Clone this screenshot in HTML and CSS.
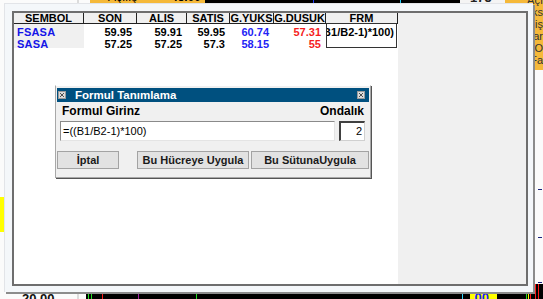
FILE: index.html
```html
<!DOCTYPE html>
<html lang="tr">

<head>
    <meta charset="UTF-8">
    <meta name="viewport" content="width=device-width, initial-scale=1.0">
    <title>Formul Tanımlama</title>
    <link rel="stylesheet" href="styles.css">
</head>

<body>
    <div class="desk">
        <!-- the trading screen behind the window -->
        <div class="bg-line"></div>
        <div class="bg-price top-price">44.10</div>
        <div class="bg-orange"><span class="bg-label">Açılış</span><span class="bg-val">45.00</span></div>
        <div class="bg-black"><i class="tick blue"></i><i class="tick cyan"></i></div>
        <div class="bg-light">175</div>
        <div class="bg-side">
            <span>Açı</span><span>ks</span><span>iş</span><span>ar</span><span>O</span><span>Fa</span>
        </div>
        <div class="bg-mark m1"></div>
        <div class="bg-mark m2"></div>
        <div class="bg-mark m3"></div>
        <div class="bg-yellow"></div>
        <div class="bg-price bottom-price">20.00</div>
        <div class="bg-chart">
            <i class="bar g" style="left: 2px"></i>
            <i class="bar g" style="left: 5px"></i>
            <i class="bar r" style="left: 16px"></i>
            <i class="bar p" style="left: 52px"></i>
            <i class="bar g" style="left: 110px"></i>
            <i class="bar c" style="left: 376px"></i>
            <div class="chart-box">00.</div>
            <i class="bar g" style="left: 440px"></i>
            <i class="bar y" style="left: 442px"></i>
            <i class="bar r" style="left: 444px"></i>
            <i class="bar r" style="left: 449px"></i>
            <i class="bar r" style="left: 452px"></i>
        </div>

        <!-- formula window -->
        <div class="window">
            <div class="panel">
                <div class="grid">
                    <div class="head">
                        <div class="hc w-sym">SEMBOL</div>
                        <div class="hc w-son">SON</div>
                        <div class="hc w-alis">ALIS</div>
                        <div class="hc w-satis">SATIS</div>
                        <div class="hc w-yuks">G.YUKS</div>
                        <div class="hc w-dusuk">G.DUSUK</div>
                        <div class="hc w-frm">FRM</div>
                    </div>
                    <div class="row">
                        <div class="sym w-sym">FSASA</div>
                        <div class="num w-son">59.95</div>
                        <div class="num w-alis">59.91</div>
                        <div class="num w-satis">59.95</div>
                        <div class="num w-yuks up">60.74</div>
                        <div class="num w-dusuk down">57.31</div>
                        <div class="num w-frm"></div>
                    </div>
                    <div class="row">
                        <div class="sym w-sym">SASA</div>
                        <div class="num w-son">57.25</div>
                        <div class="num w-alis">57.25</div>
                        <div class="num w-satis">57.3</div>
                        <div class="num w-yuks up">58.15</div>
                        <div class="num w-dusuk down">55</div>
                        <div class="num w-frm"></div>
                    </div>
                    <!-- cell being edited -->
                    <div class="editor"><span>=((B1/B2-1)*100)</span></div>
                </div>
                <div class="side"></div>
            </div>
        </div>

        <!-- dialog -->
        <div class="dialog">
            <div class="title">
                <svg class="tbox" width="8" height="8" viewBox="0 0 8 8">
                    <rect x="0.5" y="0.5" width="7" height="7" fill="#dcdcdc" stroke="#9a9a9a" />
                    <path d="M2 2 L6 6 M6 2 L2 6" stroke="#505050" stroke-width="1" />
                </svg>
                <span class="title-text">Formul Tanımlama</span>
                <svg class="tbox close" width="8" height="8" viewBox="0 0 8 8">
                    <rect x="0.5" y="0.5" width="7" height="7" fill="#dcdcdc" stroke="#9a9a9a" />
                    <path d="M2 2 L6 6 M6 2 L2 6" stroke="#505050" stroke-width="1" />
                </svg>
            </div>
            <div class="labels">
                <span>Formul Girinz</span>
                <span>Ondalık</span>
            </div>
            <div class="inputs">
                <div class="field formula">=((B1/B2-1)*100)</div>
                <div class="field digits">2</div>
            </div>
            <div class="buttons">
                <button class="btn b-cancel">İptal</button>
                <button class="btn b-cell">Bu Hücreye Uygula</button>
                <button class="btn b-col">Bu SütunaUygula</button>
            </div>
        </div>
    </div>
</body>

</html>
```

FILE: styles.css
```css
body {
    margin: 0;
    font-family: "Liberation Sans", Arial, sans-serif;
    font-size: 11px;
    font-weight: bold;
}

.desk {
    position: relative;
    width: 543px;
    height: 299px;
    overflow: hidden;
    background-color: #fbfbfb;
}

/* background app pieces */
.bg-line {
    position: absolute;
    left: 77px;
    top: 0;
    width: 2px;
    height: 299px;
    background-color: #dcdcdc;
}

.bg-price {
    position: absolute;
    font-size: 13px;
    color: #111;
    line-height: 14px;
}

.top-price {
    left: 25px;
    top: -11px;
}

.bottom-price {
    left: 22px;
    top: 292px;
}

.bg-orange {
    position: absolute;
    left: 90px;
    top: 0;
    width: 115px;
    height: 4px;
    background-color: #f5b93a;
    overflow: hidden;
}

.bg-label {
    position: absolute;
    left: 18px;
    top: -10px;
    font-weight: normal;
    font-size: 12px;
}

.bg-val {
    position: absolute;
    right: 4px;
    top: -10px;
    font-size: 12px;
}

.bg-black {
    position: absolute;
    left: 205px;
    top: 0;
    width: 255px;
    height: 4px;
    background-color: #000;
}

.tick {
    position: absolute;
    top: 0;
    width: 1px;
    height: 4px;
}

.tick.blue {
    left: 108px;
    background-color: #2040ff;
}

.tick.cyan {
    left: 195px;
    background-color: #20d0ff;
}

.bg-light {
    position: absolute;
    left: 460px;
    top: -10px;
    width: 45px;
    height: 14px;
    padding-left: 10px;
    box-sizing: border-box;
    font-size: 13px;
    color: #222;
    background-color: #f4f4f4;
}

.bg-side {
    position: absolute;
    left: 505px;
    top: -6px;
    width: 38px;
    height: 76px;
    background-color: #f5b93a;
    display: flex;
    flex-direction: column;
    align-items: flex-end;
    font-weight: normal;
    font-size: 11px;
    line-height: 12px;
    color: #333;
    overflow: hidden;
}

.bg-mark {
    position: absolute;
    left: 538px;
    width: 4px;
    height: 1px;
    background-color: #1a237e;
}

.m1 { top: 189px; }
.m2 { top: 237px; }
.m3 { top: 282px; }

.bg-yellow {
    position: absolute;
    left: 0;
    top: 197px;
    width: 4px;
    height: 35px;
    background-color: #ffff00;
}

.bg-chart {
    position: absolute;
    left: 86px;
    top: 284px;
    width: 457px;
    height: 15px;
    background-color: #000;
}

.bar {
    position: absolute;
    bottom: 0;
    width: 1px;
    height: 15px;
}

.bar.g { background-color: #22dd22; }
.bar.r { background-color: #ff1a1a; }
.bar.p { background-color: #a020a0; }
.bar.c { background-color: #30d8ff; }
.bar.y { background-color: #ffee00; }

.chart-box {
    position: absolute;
    left: 384px;
    top: 0;
    width: 27px;
    height: 15px;
    background-color: #ffff00;
    color: #1a1aff;
    font-size: 13px;
    line-height: 15px;
    padding-top: 6px;
    box-sizing: border-box;
    text-align: center;
    overflow: hidden;
}

/* window */
.window {
    position: absolute;
    left: 4px;
    top: 3px;
    width: 529px;
    height: 289px;
    box-sizing: border-box;
    padding: 7px 5px 6px 7px;
    background-color: #f4f7fa;
    border-left: 1px solid #e2e4e8;
    border-top: 1px solid #e2e4e8;
    box-shadow: 2px 2px 0 #8c8c8c;
    display: flex;
}

.panel {
    flex: 1;
    display: flex;
    border: 2px solid #6e6e6e;
}

.grid {
    position: relative;
    width: 384px;
    background-color: #fff;
}

.side {
    flex: 1;
    background-color: #f0f0f0;
}

.head {
    display: flex;
    height: 10px;
    line-height: 11px;
    background-color: #f0f0f0;
    border-bottom: 1px solid #222;
}

.hc {
    box-sizing: border-box;
    text-align: center;
    color: #000;
    border-right: 1px solid #222;
}

.w-sym { width: 70px; }
.w-son { width: 53px; }
.w-alis { width: 50px; }
.w-satis { width: 43px; }
.w-yuks { width: 44px; }
.w-dusuk { width: 52px; }
.w-frm { width: 72px; }

.row {
    display: flex;
    height: 12px;
    line-height: 16px;
}

.sym {
    box-sizing: border-box;
    padding-left: 3px;
    color: #1515e8;
    background-color: #f0f0f0;
    letter-spacing: 0.2px;
}

.num {
    box-sizing: border-box;
    text-align: right;
    padding-right: 5px;
    color: #000;
}

.num.up { color: #2323f5; }
.num.down { color: #f51d1d; }

.editor {
    position: absolute;
    left: 312px;
    top: 10px;
    width: 71px;
    height: 25px;
    box-sizing: border-box;
    border: 1px solid #333;
    background-color: #fff;
    display: flex;
    justify-content: flex-end;
    overflow: hidden;
    padding-right: 2px;
    line-height: 16px;
    white-space: nowrap;
    color: #000;
}

/* dialog */
.dialog {
    position: absolute;
    left: 55px;
    top: 85px;
    width: 316px;
    box-sizing: border-box;
    padding: 2px 1px 8px 1px;
    background-color: #f0f0f0;
    border: 1px solid #a8a8a8;
    border-top-color: #fff;
    box-shadow: 1px 1px 0 #555;
}

.title {
    height: 14px;
    background-color: #00507f;
    display: flex;
    align-items: center;
    padding: 0 4px 0 1px;
    color: #fff;
}

.title-text {
    margin-left: 9px;
    flex: 1;
    font-size: 11.5px;
    line-height: 14px;
}

.labels {
    display: flex;
    justify-content: space-between;
    margin-top: 3px;
    padding: 0 5px;
    height: 13px;
    line-height: 13px;
    font-size: 12px;
    color: #000;
}

.inputs {
    display: flex;
    gap: 4px;
    margin-top: 3px;
    padding: 0 4px 0 3px;
}

.field {
    height: 20px;
    box-sizing: border-box;
    background-color: #fff;
    border: 1px solid;
    border-color: #8a8a8a #e4e4e4 #e4e4e4 #8a8a8a;
    font-weight: normal;
    line-height: 18px;
    color: #000;
}

.formula {
    flex: 1;
    padding-left: 2px;
}

.digits {
    width: 26px;
    text-align: right;
    padding-right: 2px;
    border-color: #404040 #d0d0d0 #d0d0d0 #404040;
    border-width: 2px 1px 1px 2px;
    line-height: 17px;
}

.buttons {
    display: flex;
    margin-top: 10px;
}

.btn {
    height: 18px;
    padding: 0;
    font-family: "Liberation Sans", Arial, sans-serif;
    font-size: 11px;
    font-weight: bold;
    color: #1a1a1a;
    background-color: #e2e2e2;
    border: 1px solid #a3a3a3;
    border-radius: 0;
}

.b-cancel { width: 62px; }
.b-cell { width: 112px; margin-left: 18px; }
.b-col { width: 118px; margin-left: 2px; }
```
